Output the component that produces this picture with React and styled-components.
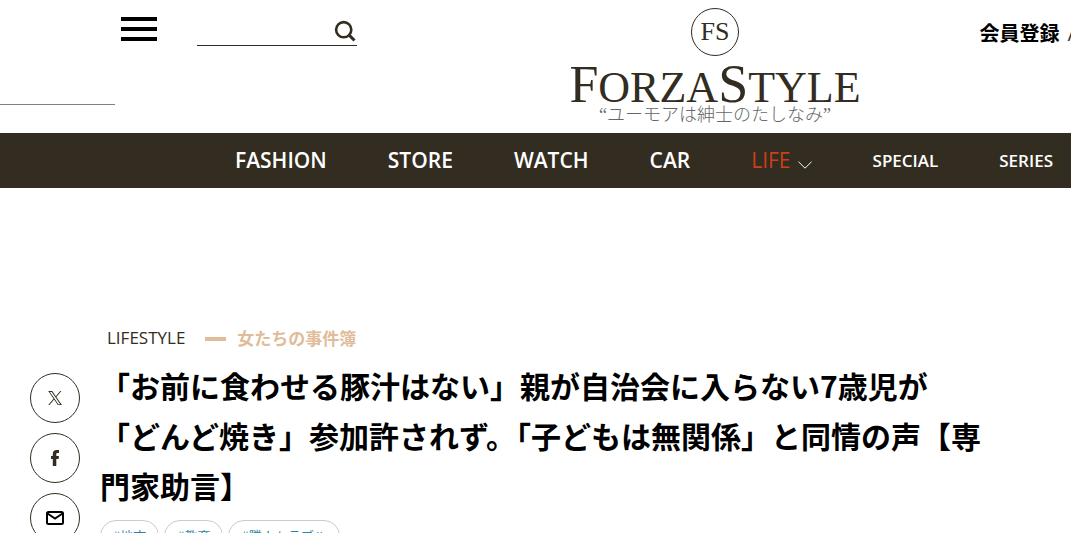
import React from 'react';
import styled, { createGlobalStyle } from 'styled-components';

const navItems = [
  { label: 'FASHION' },
  { label: 'STORE' },
  { label: 'WATCH' },
  { label: 'CAR' },
  { label: 'LIFE', active: true },
  { label: 'SPECIAL', small: true },
  { label: 'SERIES', small: true },
];

const tags = ['#地方', '#教育', '#隣人トラブル'];

const App = () => {
  return (
    <>
      <GlobalStyle />
      <Header>
        <HeaderLeft>
          <Tools>
            <MenuButton type="button" aria-label="メニュー">
              <MenuBar />
              <MenuBar />
              <MenuBar />
            </MenuButton>
            <SearchForm role="search">
              <SearchInput type="text" aria-label="検索" />
              <SearchButton type="submit" aria-label="検索する">
                <svg width="22" height="22" viewBox="0 0 22 22" fill="none" stroke="#332c20">
                  <circle cx="9.7" cy="9.7" r="7.6" strokeWidth="2.6" />
                  <path d="M15.4 15.4L20.5 20.5" strokeWidth="3" />
                </svg>
              </SearchButton>
            </SearchForm>
          </Tools>
          <Rule />
        </HeaderLeft>
        <Brand href="#">
          <Emblem>FS</Emblem>
          <Wordmark>
            <BigF>F</BigF>ORZA<BigS>S</BigS>TYLE
          </Wordmark>
          <Tagline>“ユーモアは紳士のたしなみ”</Tagline>
        </Brand>
        <Account>
          <AccountLink href="#">会員登録</AccountLink>
          <Slash>/</Slash>
        </Account>
      </Header>
      <Nav>
        {navItems.map((item) => (
          <NavLink key={item.label} href="#" $small={item.small} $active={item.active}>
            {item.label}
            {item.active && (
              <svg width="14" height="8" viewBox="0 0 14 8" fill="none" stroke="#fff">
                <path d="M0.5 0.8L7 7.2L13.5 0.8" />
              </svg>
            )}
          </NavLink>
        ))}
      </Nav>
      <Main>
        <Share>
          <ShareLink href="#" aria-label="X">
            <svg width="14" height="14" viewBox="0 0 24 24" fill="#332c20">
              <path d="M14.3 10.2L23 0h-2.1l-7.5 8.8L7.4 0H.4l9.1 13.3L.4 24h2.1l8-9.3 6.4 9.3h7L14.3 10.2zM11.4 13.4l-.9-1.3L3.2 1.6h3.2l5.9 8.5.9 1.3 7.7 11.1h-3.2l-6.3-9.1z" />
            </svg>
          </ShareLink>
          <ShareLink href="#" aria-label="Facebook">
            <svg width="8" height="16" viewBox="0 0 8 16" fill="#332c20">
              <path d="M1.8 16V9H0V6h1.8V4C1.8 1.5 3.2 0 5.6 0H8v3H6.5C5.6 3 5.3 3.3 5.3 4.2V6H8l-.4 3H5.3V16z" />
            </svg>
          </ShareLink>
          <ShareLink href="#" aria-label="メール">
            <svg width="18" height="14" viewBox="0 0 18 14" fill="none" stroke="#000" strokeWidth="2">
              <rect x="1" y="1" width="16" height="12" rx="1.5" />
              <path d="M1.5 2.5L9 7.5L16.5 2.5" />
            </svg>
          </ShareLink>
        </Share>
        <Article>
          <Category>
            <CategoryLink href="#">LIFESTYLE</CategoryLink>
            <Dash />
            <SeriesLink href="#">女たちの事件簿</SeriesLink>
          </Category>
          <Title>
            「お前に食わせる豚汁はない」親が自治会に入らない7歳児が「どんど焼き」参加許されず。「子どもは無関係」と同情の声【専門家助言】
          </Title>
          <TagList>
            {tags.map((tag) => (
              <li key={tag}>
                <TagLink href="#">{tag}</TagLink>
              </li>
            ))}
          </TagList>
        </Article>
      </Main>
    </>
  );
};

const GlobalStyle = createGlobalStyle`
  * {
    box-sizing: border-box;
    margin: 0;
    padding: 0;
  }
  html {
    overflow: hidden;
  }
  body {
    background: #fff;
    color: #000;
    font-family: 'Open Sans', 'Noto Sans CJK JP', sans-serif;
  }
  a {
    color: inherit;
    text-decoration: none;
  }
  button {
    border: 0;
    background: none;
    cursor: pointer;
  }
  svg {
    display: block;
  }
`;

const Header = styled.header`
  display: grid;
  grid-template-columns: 1fr auto 1fr;
  min-width: 1430px;
  height: 133px;
`;

const HeaderLeft = styled.div`
  padding-top: 16px;
`;

const Tools = styled.div`
  display: flex;
  align-items: flex-start;
  gap: 40px;
  padding-left: 121px;
`;

const MenuButton = styled.button`
  display: flex;
  flex-direction: column;
  gap: 6px;
  width: 36px;
  padding-top: 1px;
`;

const MenuBar = styled.span`
  height: 4px;
  background: #000;
`;

const SearchForm = styled.form`
  display: flex;
  align-items: center;
  width: 160px;
  height: 30px;
  border-bottom: 1px solid #332c20;
`;

const SearchInput = styled.input`
  flex: 1;
  min-width: 0;
  border: 0;
  outline: 0;
  background: none;
  font-size: 16px;
`;

const SearchButton = styled.button`
  padding-right: 1px;
`;

const Rule = styled.hr`
  width: 115px;
  margin-top: 58px;
  border: 0;
  border-top: 1px solid #808080;
`;

const Brand = styled.a`
  display: flex;
  flex-direction: column;
  align-items: center;
  padding-top: 8px;
  color: #332c20;
  font-family: 'Liberation Serif', 'Noto Sans CJK JP', serif;
`;

const Emblem = styled.span`
  display: flex;
  align-items: center;
  justify-content: center;
  width: 48px;
  height: 48px;
  border: 1px solid #332c20;
  border-radius: 50%;
  font-size: 26px;
  line-height: 48px;
`;

const Wordmark = styled.span`
  margin-top: 10px;
  font-size: 44px;
  line-height: 36px;
  white-space: nowrap;
`;

const BigF = styled.span`
  font-size: 52px;
`;

const BigS = styled.span`
  font-size: 54px;
`;

const Tagline = styled.span`
  color: #666;
  font-size: 18px;
  font-weight: 300;
  line-height: 18px;
  white-space: nowrap;
`;

const Account = styled.div`
  display: flex;
  align-items: flex-start;
  gap: 8px;
  padding: 20px 0 0 119px;
  font-size: 20px;
  line-height: 28px;
`;

const AccountLink = styled.a`
  font-weight: 700;
`;

const Slash = styled.span`
  color: #332c20;
`;

const Nav = styled.nav`
  display: flex;
  align-items: center;
  gap: 61px;
  min-width: 1430px;
  height: 55px;
  padding-left: 235px;
  background: #332c20;
`;

const NavLink = styled.a`
  display: flex;
  align-items: center;
  gap: 7px;
  color: ${({ $active }) => ($active ? '#c8411b' : '#fff')};
  font-size: ${({ $small }) => ($small ? '17px' : '21px')};
  font-weight: ${({ $active }) => ($active ? 500 : 600)};
  line-height: 27px;
  svg {
    margin-top: 8px;
  }
`;

const Main = styled.main`
  display: flex;
  gap: 20px;
  padding: 138px 71px 0 30px;
`;

const Share = styled.div`
  display: flex;
  flex-direction: column;
  flex-shrink: 0;
  gap: 10px;
  padding-top: 47px;
`;

const ShareLink = styled.a`
  display: flex;
  align-items: center;
  justify-content: center;
  width: 50px;
  height: 50px;
  border: 1px solid #332c20;
  border-radius: 50%;
`;

const Article = styled.article`
  flex: 1;
  max-width: 886px;
`;

const Category = styled.div`
  display: flex;
  align-items: center;
  height: 24px;
  padding-left: 7px;
  font-size: 17px;
  line-height: 24px;
`;

const CategoryLink = styled.a`
  color: #332c20;
  font-weight: 500;
`;

const Dash = styled.span`
  width: 21px;
  height: 4px;
  margin: 2px 11px 0 20px;
  background: #e0bc9a;
`;

const SeriesLink = styled.a`
  color: #e0bc9a;
  font-family: 'Noto Sans CJK JP', sans-serif;
  font-weight: 700;
`;

const Title = styled.h1`
  margin-top: 10px;
  font-size: 30px;
  font-weight: 600;
  line-height: 50px;
  font-family: 'Noto Sans CJK JP', sans-serif;
`;

const TagList = styled.ul`
  display: flex;
  flex-wrap: wrap;
  gap: 5px;
  margin-top: 10px;
  list-style: none;
`;

const TagLink = styled.a`
  display: block;
  padding: 0 12px;
  border: 1px solid #ccc;
  border-radius: 16px;
  color: #2c83a8;
  font-family: 'Noto Sans CJK JP', sans-serif;
  font-size: 13px;
  line-height: 30px;
`;

export default App;
